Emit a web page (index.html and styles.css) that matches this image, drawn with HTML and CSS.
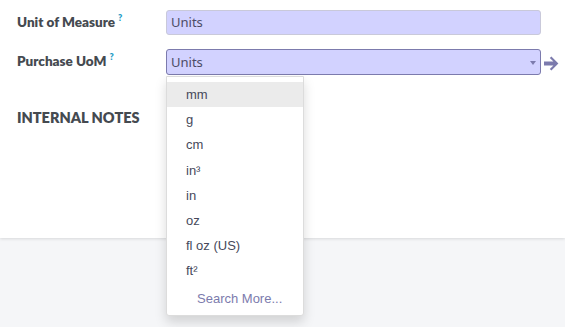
FILE: index.html
```html
<!DOCTYPE html>
<html lang="en">
<head>
  <meta charset="UTF-8">
  <title>Product - Units of Measure</title>
  <link rel="stylesheet" href="styles.css">
</head>
<body>
  <div class="sheet">
    <div class="field-row">
      <label class="field-label">Unit of Measure<sup class="help">?</sup></label>
      <div class="field-input">Units</div>
    </div>

    <div class="field-row">
      <label class="field-label">Purchase UoM<sup class="help">?</sup></label>
      <div class="field-input is-focused">
        Units
        <span class="caret"></span>
        <ul class="dropdown">
          <li class="active">mm</li>
          <li>g</li>
          <li>cm</li>
          <li>in³</li>
          <li>in</li>
          <li>oz</li>
          <li>fl oz (US)</li>
          <li>ft²</li>
          <li class="search-more">Search More...</li>
        </ul>
      </div>
      <svg class="open-link" width="16" height="15" viewBox="0 0 16 15">
        <path d="M1 5.6h9.4L6.8 2 8.4 0.4 15.4 7.5 8.4 14.6 6.8 13 10.4 9.4H1z" />
      </svg>
    </div>

    <h3 class="group-title">INTERNAL NOTES</h3>
  </div>
</body>
</html>
```

FILE: styles.css
```css
html, body { min-height: 100%; }
body { margin: 0; min-height: 327px; background: #f5f6f8; font-family: "Noto Sans", "Open Sans", sans-serif; }
.sheet { position: relative; background: #fff; height: 238px; padding: 10px 0 0 17px; box-sizing: border-box; box-shadow: 0 1px 3px rgba(0,0,0,0.12); }

.field-row { display: grid; grid-template-columns: 149px 375px 20px; align-items: center; margin-bottom: 14px; }
.field-label { font-family: Lato, "Noto Sans", sans-serif; font-size: 13.5px; font-weight: 800; color: #454a50; align-self: start; padding-top: 2px; }
.help { color: #1f9cc5; font-size: 9px; margin-left: 3px; vertical-align: 6px; }

.field-input { position: relative; height: 25px; line-height: 23px; box-sizing: border-box; padding: 0 4px; font-size: 13px; color: #4c4c66; background: #d2d2ff; border: 1px solid #c9c9da; border-radius: 3px; }
.field-input.is-focused { border-color: #7c7bad; height: 26px; line-height: 24px; }
.caret { position: absolute; right: 4px; top: 11px; border-left: 3.5px solid transparent; border-right: 3.5px solid transparent; border-top: 4px solid #7c7bad; }
.open-link { fill: #7c7bad; margin-left: 2px; margin-top: 2px; }

.dropdown { position: absolute; top: 26px; left: -1px; width: 136px; margin: 0; padding: 5px 0 4px; list-style: none; background: #fff; border: 1px solid #dcdcdc; border-radius: 0 0 3px 3px; box-shadow: 0 6px 12px rgba(0,0,0,0.15); font-family: "Liberation Sans", Arial, sans-serif; font-size: 13px; z-index: 2; }
.dropdown li { height: 25.2px; line-height: 25px; padding-left: 19px; color: #46495a; }
.dropdown li.active { background: #ebebeb; }
.dropdown li.search-more { padding-left: 30px; margin-top: 2px; color: #7c7bad; }

.group-title { margin: 34px 0 0; font-family: Lato, "Noto Sans", sans-serif; font-size: 14.5px; font-weight: 800; color: #454a50; }
```
